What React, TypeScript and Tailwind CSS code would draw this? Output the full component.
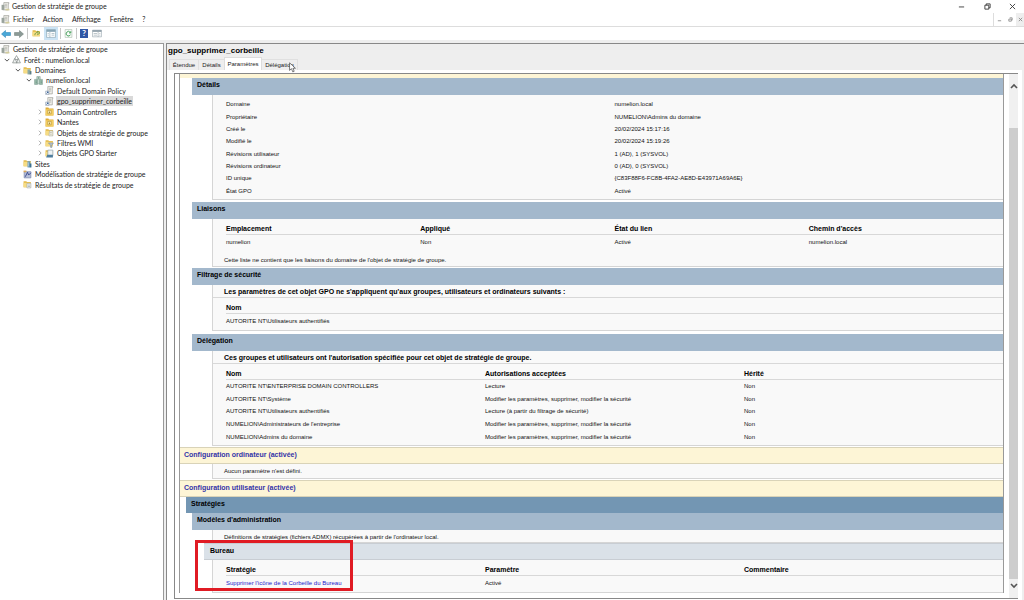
import React from 'react';
import clsx from 'clsx';

type IconKind = 'console' | 'forest' | 'domains' | 'domain' | 'gpo' | 'ou' | 'gpos' | 'wmi' | 'starter' | 'sites' | 'model' | 'results';

interface TreeNode {
    label: string;
    icon: IconKind;
    level: number;
    state?: 'open' | 'closed';
    selected?: boolean;
}

const tree: TreeNode[] = [
    { label: 'Gestion de stratégie de groupe', icon: 'console', level: 0 },
    { label: 'Forêt : numelion.local', icon: 'forest', level: 1, state: 'open' },
    { label: 'Domaines', icon: 'domains', level: 2, state: 'open' },
    { label: 'numelion.local', icon: 'domain', level: 3, state: 'open' },
    { label: 'Default Domain Policy', icon: 'gpo', level: 4 },
    { label: 'gpo_supprimer_corbeille', icon: 'gpo', level: 4, selected: true },
    { label: 'Domain Controllers', icon: 'ou', level: 4, state: 'closed' },
    { label: 'Nantes', icon: 'ou', level: 4, state: 'closed' },
    { label: 'Objets de stratégie de groupe', icon: 'gpos', level: 4, state: 'closed' },
    { label: 'Filtres WMI', icon: 'wmi', level: 4, state: 'closed' },
    { label: 'Objets GPO Starter', icon: 'starter', level: 4, state: 'closed' },
    { label: 'Sites', icon: 'sites', level: 2 },
    { label: 'Modélisation de stratégie de groupe', icon: 'model', level: 2 },
    { label: 'Résultats de stratégie de groupe', icon: 'results', level: 2 },
];

const indents = ['pl-0', 'pl-0', 'pl-[11px]', 'pl-[22px]', 'pl-[33px]'];

const details = [
    ['Domaine', 'numelion.local'],
    ['Propriétaire', 'NUMELION\\Admins du domaine'],
    ['Créé le', '20/02/2024 15:17:16'],
    ['Modifié le', '20/02/2024 15:19:26'],
    ['Révisions utilisateur', '1 (AD), 1 (SYSVOL)'],
    ['Révisions ordinateur', '0 (AD), 0 (SYSVOL)'],
    ['ID unique', '{C83F88F6-FC8B-4FA2-AE8D-E43971A69A6E}'],
    ['État GPO', 'Activé'],
];

const delegation = [
    ['AUTORITE NT\\ENTERPRISE DOMAIN CONTROLLERS', 'Lecture', 'Non'],
    ['AUTORITE NT\\Système', 'Modifier les paramètres, supprimer, modifier la sécurité', 'Non'],
    ['AUTORITE NT\\Utilisateurs authentifiés', 'Lecture (à partir du filtrage de sécurité)', 'Non'],
    ["NUMELION\\Administrateurs de l'entreprise", 'Modifier les paramètres, supprimer, modifier la sécurité', 'Non'],
    ['NUMELION\\Admins du domaine', 'Modifier les paramètres, supprimer, modifier la sécurité', 'Non'],
];

function Folder() {
    return (
        <>
            <path d="M1 2h5l1 1.5h7V13H1z" fill="#e3b94a" />
            <path d="M1 5h13v8H1z" fill="#f6dc84" />
        </>
    );
}

function Scroll() {
    return (
        <>
            <path d="M5 1h9v2h-1v11H3v-3h2z" fill="#f1f1ec" stroke="#8d8d86" />
            <path d="M7 4h4M7 6.5h4M7 9h4" stroke="#9a9a90" />
        </>
    );
}

function TreeIcon({ kind }: { kind: IconKind }) {
    return (
        <svg viewBox="0 0 16 16" className="w-[9px] h-[9px] shrink-0" fill="none" aria-hidden="true">
            {kind === 'console' && (
                <>
                    <Scroll />
                    <path d="M1 5h5v9H1z" fill="#9aa39c" />
                    <path d="M8 12h7v3H8z" fill="#d3cd9c" />
                </>
            )}
            {kind === 'forest' && (
                <>
                    <path d="M8 1L12 8H4z" fill="#fff" stroke="#868d8c" strokeWidth="1.3" />
                    <path d="M5 6L9 14H1zM11 6l4 8H8z" fill="#f1f4f3" stroke="#868d8c" strokeWidth="1.3" />
                </>
            )}
            {kind === 'domains' && (
                <>
                    <Folder />
                    <path d="M8 6h5v9H8z" fill="#8faaa4" />
                    <path d="M12 9h3v6h-3z" fill="#5e7e87" />
                </>
            )}
            {kind === 'domain' && (
                <>
                    <path d="M5 1h6v13H5z" fill="#c3d8cd" stroke="#7d9c90" />
                    <path d="M1 6h5v9H1zM10 6h5v9h-5z" fill="#9fbfaf" stroke="#7d9c90" />
                    <path d="M7 3h2M7 5h2M3 9h2M12 9h2M3 12h2M12 12h2" stroke="#42705e" />
                </>
            )}
            {kind === 'gpo' && (
                <>
                    <Scroll />
                    <path d="M1 9h6v6H1z" fill="#fff" stroke="#8b9cae" />
                    <path d="M2.5 13.5l3-3M3 10.5h2.5V13" stroke="#27538e" strokeWidth="1.4" />
                </>
            )}
            {kind === 'ou' && (
                <>
                    <path d="M1 1h5l1 1.500h8V15H1z" fill="#e0ac35" />
                    <path d="M2 4h13v11H1z" fill="#f4cf62" />
                    <path d="M5 6h6v6H5z" fill="#fff2ba" stroke="#a98731" />
                    <path d="M7 8h2v3H7z" fill="#a98731" />
                </>
            )}
            {kind === 'gpos' && (
                <>
                    <Folder />
                    <path d="M8 5h6v9H7z" fill="#f2f1e7" stroke="#a5a593" />
                    <path d="M9 8h3M9 11h3" stroke="#a5a593" />
                </>
            )}
            {kind === 'wmi' && (
                <>
                    <Folder />
                    <path d="M6 7h9l-3 4v4h-2v-4z" fill="#b8c4cd" stroke="#788895" />
                </>
            )}
            {kind === 'starter' && (
                <>
                    <Folder />
                    <path d="M5 2h9v10H5z" fill="#eef3f5" stroke="#7b8f9c" />
                    <path d="M4 10h10v5H2z" fill="#4f7e9e" />
                </>
            )}
            {kind === 'sites' && (
                <>
                    <Folder />
                    <path d="M8 4h5v11H8z" fill="#6f9db8" />
                    <path d="M12 8h3v7h-3z" fill="#3d7191" />
                    <path d="M9.5 6v7" stroke="#d9ebf4" />
                </>
            )}
            {kind === 'model' && (
                <>
                    <path d="M2 3h12v11H2z" fill="#b5bed7" stroke="#6372a0" />
                    <path d="M4 12l4-8 2 5 4-4" stroke="#34458c" strokeWidth="1.6" />
                    <path d="M1 1h5v3H1z" fill="#dba95a" />
                </>
            )}
            {kind === 'results' && (
                <>
                    <Folder />
                    <path d="M7 6h7v8H7z" fill="#f6f6f2" stroke="#99a2a4" />
                    <path d="M8.5 9h4M8.5 11.5h4" stroke="#7b91a7" />
                </>
            )}
        </svg>
    );
}

function TreeRow({ node }: { node: TreeNode }) {
    return (
        <li className={clsx('flex flex-1 items-center', indents[node.level])}>
            {node.level > 0 && (
                <span className="w-[11px] flex justify-center shrink-0">
                    {node.state && (
                        <svg viewBox="0 0 8 8" className="w-[6px] h-[6px]" fill="none" strokeWidth="1.3" aria-hidden="true">
                            {node.state === 'open'
                                ? <path d="M1 2.5l3 3 3-3" stroke="#555" />
                                : <path d="M2.5 1l3 3-3 3" stroke="#aaa" />}
                        </svg>
                    )}
                </span>
            )}
            <button type="button" className="flex items-center gap-[2px] whitespace-nowrap">
                <TreeIcon kind={node.icon} />
                <span className={clsx('px-px leading-[10px]', node.selected && 'bg-[#d9d9d9]')}>{node.label}</span>
            </button>
        </li>
    );
}

function Toolbar() {
    return (
        <div className="flex items-center h-[13px] px-px bg-white">
            <button type="button" aria-label="Précédent" className="mr-[3px]">
                <svg viewBox="0 0 20 16" className="w-[10px] h-[8px]"><path d="M1 8l8-7v4h10v6H9v4z" fill="#49a8d8" stroke="#1f7db3" /></svg>
            </button>
            <button type="button" aria-label="Suivant">
                <svg viewBox="0 0 20 16" className="w-[10px] h-[8px]"><path d="M19 8l-8-7v4H1v6h10v4z" fill="#8b9a96" stroke="#6b7875" /></svg>
            </button>
            <span className="w-px h-[11px] bg-[#c8c8c8] ml-[3px] mr-[4px]" />
            <button type="button" aria-label="Dossier parent" className="mr-[3px]">
                <svg viewBox="0 0 16 16" className="w-[9px] h-[9px]" fill="none">
                    <Folder />
                    <path d="M5 11c0-4 3-5 5-5V4l4 3-4 3V8" stroke="#4d8b3d" strokeWidth="1.3" />
                </svg>
            </button>
            <button type="button" aria-label="Arborescence" className="w-[14px] h-[13px] bg-[#cce4f5] flex items-center justify-center">
                <svg viewBox="0 0 18 16" className="w-[10px] h-[9px]" fill="none">
                    <path d="M1 1h16v14H1z" fill="#fff" stroke="#7d99a8" />
                    <path d="M1 1h16v4H1z" fill="#87a5b5" />
                    <path d="M7 5v10M3 8h2M3 11h2M10 8h5M10 11h5" stroke="#7d99a8" />
                </svg>
            </button>
            <span className="w-px h-[11px] bg-[#c8c8c8] mx-[2px]" />
            <button type="button" aria-label="Actualiser" className="w-[11px] flex justify-center">
                <svg viewBox="0 0 16 16" className="w-[9px] h-[9px]" fill="none">
                    <path d="M2 1h12v14H2z" fill="#fafcfa" stroke="#a3b5a5" />
                    <path d="M11 6a4 4 0 10.5 4M12 4v3H9" stroke="#3f9b55" strokeWidth="1.7" />
                </svg>
            </button>
            <span className="w-px h-[11px] bg-[#c8c8c8] mx-[2px]" />
            <button type="button" aria-label="Aide" className="w-[8px] h-[9px] bg-[#3158a6] text-white text-[8px] leading-[9px] font-bold ml-px mr-[4px]">?</button>
            <button type="button" aria-label="Volet Actions">
                <svg viewBox="0 0 18 16" className="w-[10px] h-[9px]" fill="none">
                    <path d="M1 2h16v12H1z" fill="#fff" stroke="#8b9ba5" />
                    <path d="M1 2h16v3H1z" fill="#8b9ba5" />
                    <path d="M11 5v9M3 8h6M3 11h6M13 8h2M13 11h2" stroke="#8b9ba5" />
                </svg>
            </button>
        </div>
    );
}

const bandStyles = {
    config: 'h-[17px] bg-[#fdf5d6] text-[#3333a8] pl-[4px] border-y border-[#d9d3b8]',
    level0: 'h-[16px] bg-[#7396b3] text-black pl-[5px] ml-[6px]',
    level1: 'h-[17px] bg-[#a3b8cc] text-black pl-[5px] ml-[12px]',
    level2: 'h-[17px] bg-[#dae1e8] text-black pl-[6px] ml-[24px] border-y border-[#c8cdd3]',
};

function Band({ level, children }: { level: keyof typeof bandStyles; children: React.ReactNode }) {
    return <h2 className={clsx('text-[7px] leading-[13px] font-bold', bandStyles[level])}>{children}</h2>;
}

function Body({ children, className }: { children: React.ReactNode; className?: string }) {
    return <div className={clsx('ml-[32px] border-l border-b border-[#d5d5d5] bg-[#f9f9f9]', className)}>{children}</div>;
}

function Note({ children }: { children: React.ReactNode }) {
    return <p className="pl-[11px] h-[13px] leading-[14px] border-b border-[#d8d8d8] text-[7px] font-bold text-black">{children}</p>;
}

function DataTable({ head, rows, className }: { head: string[]; rows: React.ReactNode[][]; className: string }) {
    return (
        <div className="pl-[13px]">
            <table className={clsx('w-full table-fixed border-collapse', className)}>
                <thead>
                    <tr className="border-b border-[#d8d8d8] text-[7px] leading-[9px] text-black">
                        {head.map((h) => <th key={h} scope="col" className="p-0 h-[10px] text-left font-bold">{h}</th>)}
                    </tr>
                </thead>
                <tbody>
                    {rows.map((row, i) => (
                        <tr key={i}>
                            {row.map((cell, j) => <td key={j} className="p-0 whitespace-nowrap">{cell}</td>)}
                        </tr>
                    ))}
                </tbody>
            </table>
        </div>
    );
}

function Report() {
    return (
        <div className="flex-1 self-start min-w-0 border-x border-[#999] text-[#111] text-[6px] leading-[10px] font-[Liberation_Sans,sans-serif]">
            <div className="h-[4px] bg-[#fdf5d6]" />
            <section>
                <Band level="level1">Détails</Band>
                <Body className="mb-[2px] pt-[3px] pb-[2px] pl-[13px]">
                    <table className="w-full table-fixed border-collapse h-[99px]">
                        <tbody>
                            {details.map(([name, value]) => (
                                <tr key={name}>
                                    <th scope="row" className="p-0 text-left font-normal">{name}</th>
                                    <td className="p-0">{value}</td>
                                </tr>
                            ))}
                        </tbody>
                    </table>
                </Body>
            </section>
            <section>
                <Band level="level1">Liaisons</Band>
                <Body className="mb-px pt-[5px]">
                    <DataTable
                        className="h-[25px]"
                        head={['Emplacement', 'Appliqué', 'État du lien', "Chemin d'accès"]}
                        rows={[['numelion', 'Non', 'Activé', 'numelion.local']]}
                    />
                    <p className="pl-[11px] pt-[6px] pb-px">Cette liste ne contient que les liaisons du domaine de l'objet de stratégie de groupe.</p>
                </Body>
            </section>
            <section>
                <Band level="level1">Filtrage de sécurité</Band>
                <Body className="mb-[3px] pb-[2px]">
                    <Note>Les paramètres de cet objet GPO ne s'appliquent qu'aux groupes, utilisateurs et ordinateurs suivants :</Note>
                    <div className="pt-[5px]">
                        <DataTable className="h-[25px]" head={['Nom']} rows={[['AUTORITE NT\\Utilisateurs authentifiés']]} />
                    </div>
                </Body>
            </section>
            <section>
                <Band level="level1">Délégation</Band>
                <Body className="mb-px pb-[2px]">
                    <Note>Ces groupes et utilisateurs ont l'autorisation spécifiée pour cet objet de stratégie de groupe.</Note>
                    <div className="pt-[5px]">
                        <DataTable className="h-[74px]" head={['Nom', 'Autorisations acceptées', 'Hérité']} rows={delegation} />
                    </div>
                </Body>
            </section>
            <section>
                <Band level="config">Configuration ordinateur (activée)</Band>
                <Body className="mb-px">
                    <p className="pl-[11px] py-[2px]">Aucun paramètre n'est défini.</p>
                </Body>
            </section>
            <section>
                <Band level="config">Configuration utilisateur (activée)</Band>
                <Band level="level0">Stratégies</Band>
                <Band level="level1">Modèles d'administration</Band>
                <Body>
                    <p className="pl-[11px] pt-[2px]">Définitions de stratégies (fichiers ADMX) récupérées à partir de l'ordinateur local.</p>
                </Body>
                <div className="relative">
                    <Band level="level2">Bureau</Band>
                    <Body className="pt-[5px] pb-[2px]">
                        <DataTable
                            className="h-[25px]"
                            head={['Stratégie', 'Paramètre', 'Commentaire']}
                            rows={[[<a href="#corbeille" className="text-[#2222cc]">Supprimer l'icône de la Corbeille du Bureau</a>, 'Activé', '']]}
                        />
                    </Body>
                    <div className="absolute -top-[3px] left-[15px] w-[158px] h-[51px] border-[3px] border-[#e01b24]" />
                </div>
            </section>
        </div>
    );
}

function Tabs() {
    return (
        <div role="tablist" className="flex items-end h-[13px] pl-[2px] text-[6px] leading-[10px] font-[Liberation_Sans,sans-serif]">
            <button type="button" role="tab" aria-selected="false" className="w-[30px] h-[11px] border-x border-t border-[#e0e0e0]">Étendue</button>
            <button type="button" role="tab" aria-selected="false" className="w-[25px] h-[11px] border-t border-[#e0e0e0]">Détails</button>
            <button type="button" role="tab" aria-selected="true" className="w-[38px] h-[13px] bg-white border-x border-t border-[#ddd]">Paramètres</button>
            <div className="relative">
                <button type="button" role="tab" aria-selected="false" className="w-[36px] h-[11px] border-r border-t border-[#e0e0e0]">Délégation</button>
                <svg viewBox="0 0 12 18" className="absolute left-[27px] top-[3px] w-[7px] h-[11px]" aria-hidden="true">
                    <path d="M1 1v13l3.2-3 2.3 5.5 2.4-1L6.7 10.3H11z" fill="#fff" stroke="#222" />
                </svg>
            </div>
        </div>
    );
}

function WindowButtons() {
    return (
        <div className="flex items-center text-[#333]">
            <button type="button" aria-label="Réduire" className="w-[26px] flex justify-center">
                <svg viewBox="0 0 8 8" className="w-[7px] h-[7px]" stroke="currentColor"><path d="M1 4.5h6" /></svg>
            </button>
            <button type="button" aria-label="Restaurer" className="w-[26px] flex justify-center">
                <svg viewBox="0 0 8 8" className="w-[7px] h-[7px]" fill="none" stroke="currentColor"><path d="M1 2.5h4.5V7H1zM2.5 2.5V1H7v4.5H5.5" /></svg>
            </button>
            <button type="button" aria-label="Fermer" className="w-[24px] flex justify-center">
                <svg viewBox="0 0 8 8" className="w-[7px] h-[7px]" stroke="currentColor"><path d="M1 1l6 6M7 1L1 7" /></svg>
            </button>
        </div>
    );
}

export default function App() {
    return (
        <div className="h-screen flex flex-col overflow-hidden bg-[#eee] text-[#222] text-[7px] font-[Lato,sans-serif]">
            <header className="bg-white">
                <div className="flex items-center justify-between h-[13px] pl-px">
                    <h1 className="flex items-center gap-[2px]">
                        <TreeIcon kind="console" />
                        Gestion de stratégie de groupe
                    </h1>
                    <WindowButtons />
                </div>
                <div className="flex justify-between h-[14px] border-b border-[#ddd]">
                    <nav className="flex items-center pl-px">
                        <TreeIcon kind="console" />
                        <button type="button" className="ml-[3px] mr-[9px]">Fichier</button>
                        <button type="button" className="mr-[9px]">Action</button>
                        <button type="button" className="mr-[9px]">Affichage</button>
                        <button type="button" className="mr-[9px]">Fenêtre</button>
                        <button type="button">?</button>
                    </nav>
                    <div className="flex border-l border-[#ddd] text-[#888]">
                        <button type="button" aria-label="Réduire le volet" className="w-[11px] flex items-center justify-center">
                            <svg viewBox="0 0 6 6" className="w-[5px] h-[5px]" stroke="currentColor"><path d="M1 4.5h4" /></svg>
                        </button>
                        <button type="button" aria-label="Restaurer le volet" className="w-[11px] flex items-center justify-center">
                            <svg viewBox="0 0 6 6" className="w-[5px] h-[5px]" fill="none" stroke="currentColor"><path d="M1 2.5h3V5H1zM2 1h3v3" /></svg>
                        </button>
                        <button type="button" aria-label="Fermer le volet" className="w-[8px] flex items-center justify-center bg-[#eee]">
                            <svg viewBox="0 0 6 6" className="w-[5px] h-[5px]" stroke="currentColor"><path d="M1 1l4 4M5 1L1 5" /></svg>
                        </button>
                    </div>
                </div>
                <Toolbar />
            </header>

            <div className="flex flex-1 min-h-0 gap-[2px] pt-[3px]">
                <aside className="w-[164px] shrink-0 bg-white border-t border-r border-[#999] pl-px">
                    <ul className="flex flex-col h-[146px]">
                        {tree.map((node) => <TreeRow key={node.label} node={node} />)}
                    </ul>
                </aside>

                <main className="flex flex-col flex-1 min-w-0 border-t border-l border-[#888]">
                    <h2 className="h-[13px] pl-px leading-[14px] text-[8px] font-bold text-black font-[Liberation_Sans,sans-serif]">gpo_supprimer_corbeille</h2>
                    <Tabs />
                    <div className="flex-1 min-h-0 bg-white mr-[2px] pt-[3px] pl-[7px] pr-[4px] pb-px">
                        <div className="flex h-full overflow-hidden border-t border-l border-b border-[#888] pl-[4px]">
                            <Report />
                            <div className="flex flex-col items-center w-[9px] ml-[5px] shrink-0 bg-[#f0f0f0] py-[8px] text-[#555]">
                                <svg viewBox="0 0 8 8" className="w-[8px] h-[8px]" fill="none" stroke="currentColor" strokeWidth="1.6"><path d="M1 6l3-3 3 3" /></svg>
                                <div className="flex-1 w-full mt-[38px] mb-[3px] bg-[#cdcdcd]" />
                                <svg viewBox="0 0 8 8" className="w-[8px] h-[8px]" fill="none" stroke="currentColor" strokeWidth="1.6"><path d="M1 2l3 3 3-3" /></svg>
                            </div>
                        </div>
                    </div>
                </main>
            </div>
        </div>
    );
}
